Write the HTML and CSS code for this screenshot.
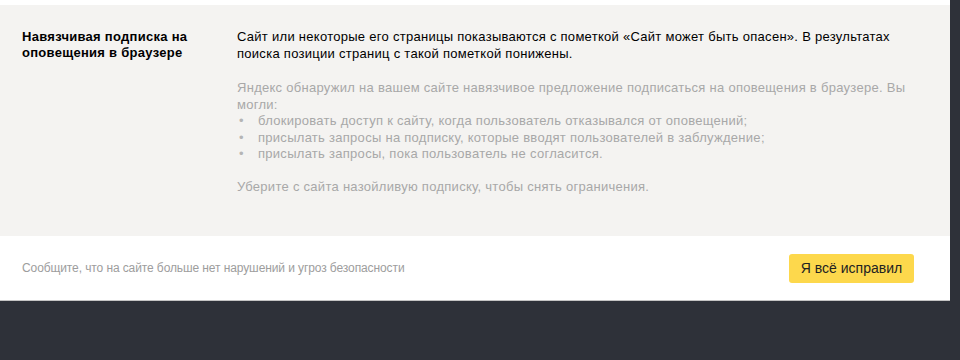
FILE: index.html
```html
<!DOCTYPE html>
<html lang="ru">
  <head>
    <meta charset="UTF-8" />
    <title>Нарушения и угрозы безопасности</title>
    <link rel="stylesheet" href="styles.css">
  </head>
  <body>
    <div class="card">
      <div class="issue">
        <h3 class="issue-title">Навязчивая подписка на оповещения в браузере</h3>
        <div class="issue-body">
          <p class="lead">
            Сайт или некоторые его страницы показываются с пометкой «Сайт может быть опасен». В результатах
            поиска позиции страниц с такой пометкой понижены.
          </p>
          <p class="note">
            Яндекс обнаружил на вашем сайте навязчивое предложение подписаться на оповещения в браузере. Вы
            могли:
          </p>
          <ul class="note-list">
            <li>блокировать доступ к сайту, когда пользователь отказывался от оповещений;</li>
            <li>присылать запросы на подписку, которые вводят пользователей в заблуждение;</li>
            <li>присылать запросы, пока пользователь не согласится.</li>
          </ul>
          <p class="note">Уберите с сайта назойливую подписку, чтобы снять ограничения.</p>
        </div>
      </div>
      <div class="footer">
        <span class="footer-text">Сообщите, что на сайте больше нет нарушений и угроз безопасности</span>
        <button type="button" class="fix-button">Я всё исправил</button>
      </div>
    </div>
  </body>
</html>
```

FILE: styles.css
```css
body {
  margin: 0;
  background-color: #2e3139;
  font-family: "Liberation Sans", Arial, sans-serif;
  font-size: 13px;
  color: #000;
}
.card {
  width: 950px;
  padding-top: 5px;
  background-color: #fff;
  border-bottom: 1px solid #c4c4c4;
}
.issue {
  display: flex;
  padding: 24px 22px 41px;
  background-color: #f4f3f1;
  letter-spacing: 0.28px;
}
.issue-title {
  width: 215px;
  margin: 0;
  font-size: 13px;
  line-height: 16px;
  font-weight: bold;
}
.issue-body {
  width: 690px;
  line-height: 16.5px;
}
.issue-body p {
  margin: 0;
}
.lead {
  margin-bottom: 18px !important;
}
.note {
  color: #a8a8a8;
}
.note-list {
  margin: 0 0 16px;
  padding: 0;
  list-style: none;
  color: #a8a8a8;
}
.note-list li {
  display: flex;
}
.note-list li::before {
  content: "•";
  width: 19px;
  padding-left: 2px;
  flex-shrink: 0;
  color: #b5b5b5;
}
.footer {
  display: flex;
  align-items: center;
  justify-content: space-between;
  height: 64px;
  padding: 0 36px 0 22px;
}
.footer-text {
  font-size: 12px;
  color: #9d9d9d;
  letter-spacing: -0.1px;
}
.fix-button {
  width: 125px;
  height: 29px;
  padding: 0;
  background-color: #fdd84c;
  border: none;
  border-radius: 3px;
  font-family: "Liberation Sans", Arial, sans-serif;
  font-size: 14px;
  color: #222;
  cursor: pointer;
}
.fix-button:hover {
  background-color: #f7cf33;
}
```
